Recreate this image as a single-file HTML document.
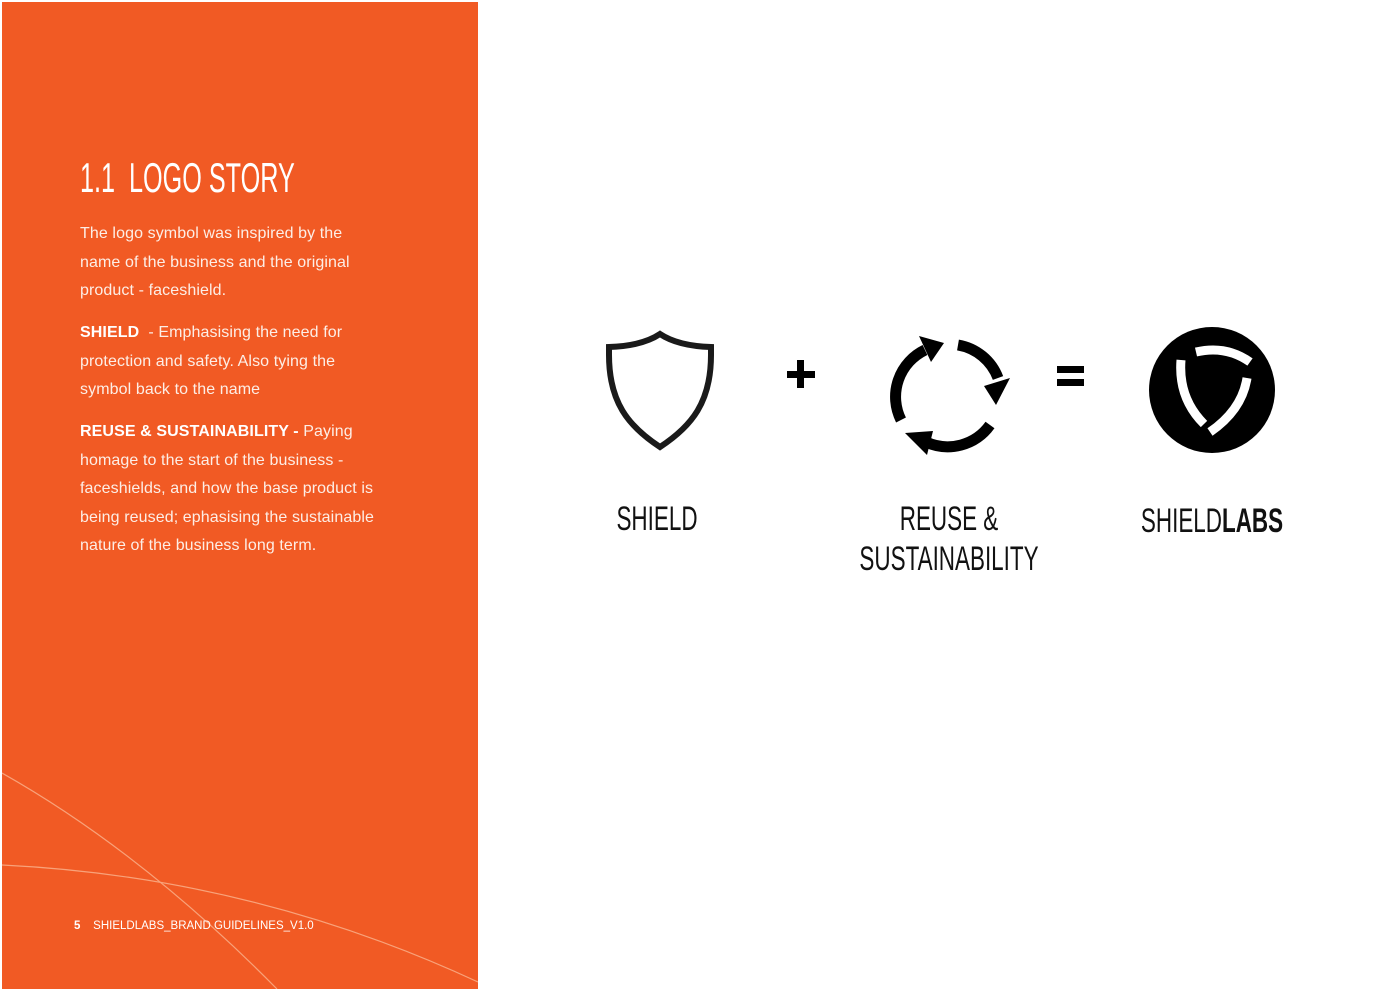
<!DOCTYPE html>
<html><head><meta charset="utf-8"><style>
html,body{margin:0;padding:0;background:#fff;width:1400px;height:990px;overflow:hidden;position:relative;font-family:"Liberation Sans",sans-serif}
.panel{position:absolute;left:2px;top:2px;width:476px;height:987px;background:#F15A24;overflow:hidden}
.t{position:absolute;color:#fff;white-space:nowrap}
.p{position:absolute;left:80px;color:#fff;font-size:16px;line-height:28.5px;white-space:nowrap;color:#fdeee6;letter-spacing:0.1px}
.p b{font-weight:bold;color:#fff}
.cond{display:inline-block;transform-origin:0 0;transform:scaleX(0.6)}
.lbl{position:absolute;font-size:34px;color:#111;white-space:nowrap;transform:translateX(-50%)}
.lbl span{display:inline-block;transform:scaleX(0.66)}
</style></head><body>
<div class="panel">
<svg width="476" height="987" style="position:absolute;left:0;top:0">
<path d="M0,771 Q140,850 275,987" stroke="#f8a27a" stroke-width="1.2" fill="none"/>
<path d="M0,863 Q250,875 476,980" stroke="#f8a27a" stroke-width="1.2" fill="none"/>
</svg>
</div>
<div class="t" style="left:80px;top:153px;font-size:42px;line-height:50px"><span class="cond">1.1&nbsp; LOGO STORY</span></div>
<div class="p" style="top:220px">The logo symbol was inspired by the<br>name of the business and the original<br>product - faceshield.</div>
<div class="p" style="top:319px"><b>SHIELD</b>&nbsp; - Emphasising the need for<br>protection and safety. Also tying the<br>symbol back to the name</div>
<div class="p" style="top:418px"><b>REUSE &amp; SUSTAINABILITY -</b> Paying<br>homage to the start of the business -<br>faceshields, and how the base product is<br>being reused; ephasising the sustainable<br>nature of the business long term.</div>
<div class="t" style="left:74px;top:920px;font-size:11.5px"><b>5</b>&nbsp;&nbsp;&nbsp;&nbsp;SHIELDLABS_BRAND GUIDELINES_V1.0</div>

<svg width="1400" height="990" style="position:absolute;left:0;top:0">
<path d="M609,347 Q642,346 660,334 Q678,346 711,347 L711,355 C711,402 692,426 660,447 C628,426 609,402 609,355 Z" stroke="#1a1a1a" stroke-width="6" fill="none" stroke-linejoin="miter"/>
<rect x="797" y="360" width="7" height="28" fill="#000"/>
<rect x="787" y="371" width="28" height="7" fill="#000"/>
<rect x="1057" y="366" width="27" height="7" fill="#000"/>
<rect x="1057" y="379" width="27" height="7" fill="#000"/>
<g stroke="#000" stroke-width="11" fill="none">
<path d="M901,420 A52,52 0 0 1 925,350"/>
<path d="M958,345 A52,52 0 0 1 998,378"/>
<path d="M990,425 A52,52 0 0 1 926,442"/>
</g>
<polygon points="931,362 919,336 944,343" fill="#000"/>
<polygon points="984,386 1010,378 996,405" fill="#000"/>
<polygon points="933,431 927,455 905,433" fill="#000"/>
<circle cx="1212" cy="390" r="63" fill="#000"/>
<g stroke="#fff" stroke-width="9" fill="none">
<path d="M1181,360 Q1178,398 1204,424"/>
<path d="M1196,352 Q1226,345 1250,362"/>
<path d="M1247,378 Q1242,410 1210,432"/>
</g>
</svg>
<div class="lbl" style="left:657px;top:500px"><span>SHIELD</span></div>
<div class="lbl" style="left:949px;top:500px"><span>REUSE &amp;</span></div>
<div class="lbl" style="left:949px;top:540px"><span>SUSTAINABILITY</span></div>
<div class="lbl" style="left:1212px;top:502px"><span>SHIELD<b>LABS</b></span></div>
</body></html>
